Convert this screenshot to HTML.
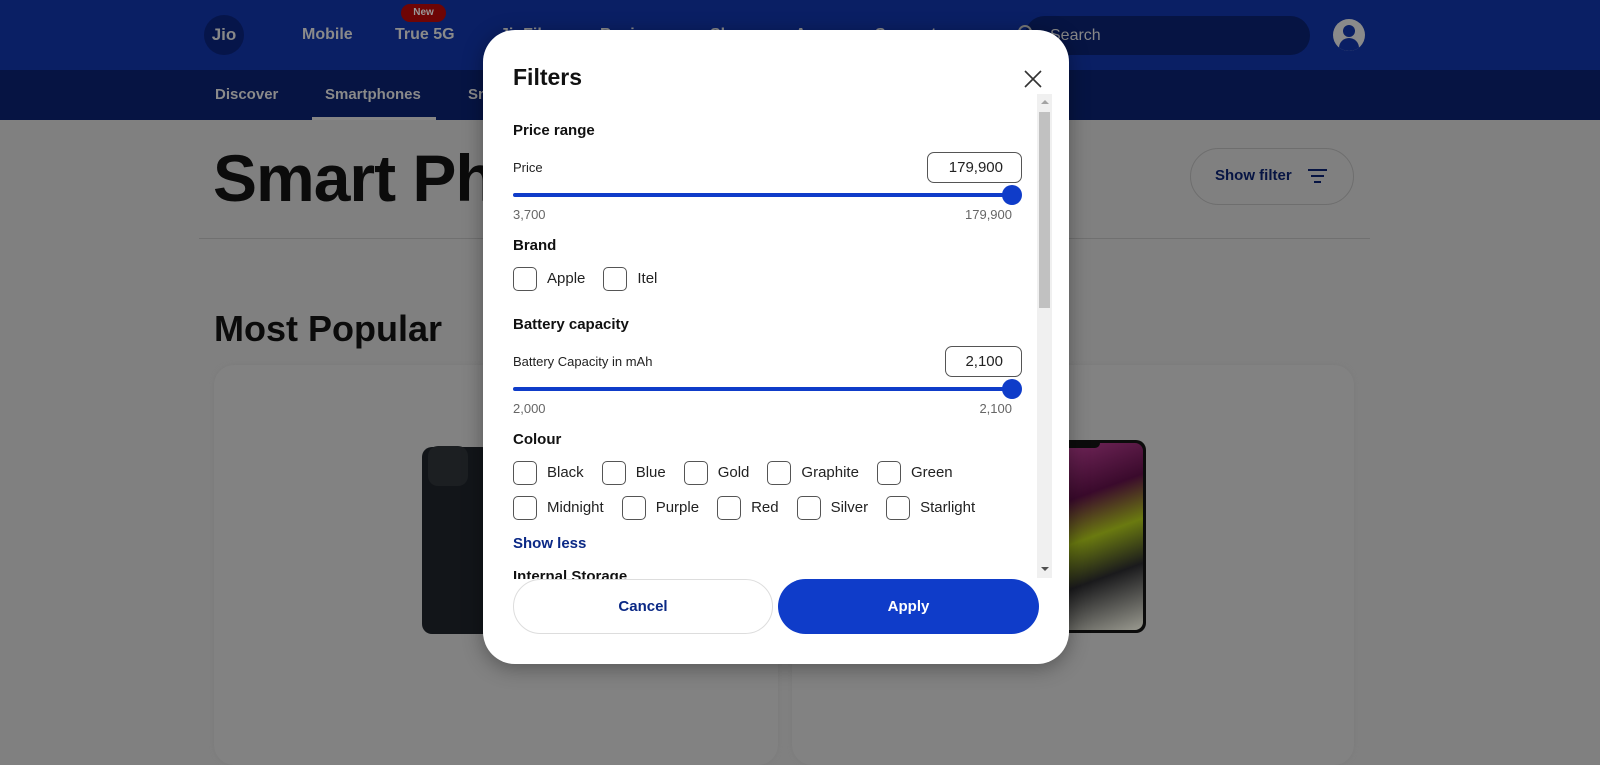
<!DOCTYPE html>
<html><head><meta charset="utf-8"><style>
*{box-sizing:border-box;margin:0;padding:0}
html,body{background:#808080}
body{width:1600px;height:745px;overflow:hidden;font-family:"Liberation Sans",Arial,sans-serif;position:relative}
.a{position:absolute}
.top{left:0;top:0;width:1600px;height:70px;background:#0a1f64}
.sub{left:0;top:70px;width:1600px;height:50px;background:#061443}
.nav{color:#8a8a8a;font-weight:bold;font-size:16px}
.cb{display:inline-block;width:24px;height:24px;border:1px solid #555;border-radius:5px;vertical-align:middle;margin-right:10px}
.row{position:absolute;left:513px;font-size:15px;color:#222;white-space:nowrap}
.row span.i{display:inline-block;margin-right:18px}
.h{position:absolute;left:513px;font-weight:bold;font-size:15px;color:#111}
.r{position:absolute;right:588px;font-size:13px;color:#666;text-align:right}
</style></head><body>
<div class="a top"></div>
<div class="a sub"></div>
<div class="a" style="left:204px;top:15px;width:40px;height:40px;border-radius:50%;background:#06154a;color:#888;font-weight:bold;font-size:17px;text-align:center;line-height:40px">Jio</div>
<div class="a nav" style="left:302px;top:26px">Mobile</div>
<div class="a nav" style="left:395px;top:26px">True 5G</div>
<div class="a" style="left:401px;top:4px;width:45px;height:18px;border-radius:9px;background:#6e0505;color:#999;font-size:10px;font-weight:bold;text-align:center;line-height:18px">New</div>
<div class="a nav" style="left:500px;top:26px">JioFiber</div>
<div class="a nav" style="left:600px;top:26px">Business</div>
<div class="a nav" style="left:710px;top:26px">Shop</div>
<div class="a nav" style="left:795px;top:26px">Apps</div>
<div class="a nav" style="left:875px;top:26px">Support</div>
<div class="a" style="left:1025px;top:16px;width:285px;height:39px;border-radius:20px;background:#061443"></div>
<div class="a" style="left:1018px;top:25px;width:14px;height:14px;border:2px solid #777;border-radius:50%"></div>
<div class="a nav" style="left:1050px;top:27px;font-weight:normal;color:#888;font-size:16px">Search</div>
<div class="a" style="left:1333px;top:19px;width:32px;height:32px;border-radius:50%;background:#8a8a8a;overflow:hidden"><div class="a" style="left:10px;top:6px;width:12px;height:12px;border-radius:50%;background:#0a1f64"></div><div class="a" style="left:6px;top:19px;width:20px;height:14px;border-radius:10px 10px 0 0;background:#0a1f64"></div></div>
<div class="a nav" style="left:215px;top:86px;font-size:15px">Discover</div>
<div class="a nav" style="left:325px;top:86px;font-size:15px">Smartphones</div>
<div class="a nav" style="left:468px;top:86px;font-size:15px">Smart</div>
<div class="a" style="left:312px;top:117px;width:124px;height:3px;background:#858585"></div>
<div class="a" style="left:213px;top:140px;font-weight:bold;font-size:66px;color:#0b0b0b;letter-spacing:-1px">Smart Phones</div>
<div class="a" style="left:1190px;top:148px;width:164px;height:57px;border:1px solid #6e6e6e;border-radius:29px"></div>
<div class="a" style="left:1215px;top:167px;font-weight:bold;font-size:15px;color:#061443">Show filter</div>
<div class="a" style="left:1308px;top:169px;width:19px;height:2px;background:#061443"></div>
<div class="a" style="left:1311px;top:175px;width:13px;height:2px;background:#061443"></div>
<div class="a" style="left:1314px;top:181px;width:7px;height:2px;background:#061443"></div>
<div class="a" style="left:199px;top:238px;width:1171px;height:1px;background:#707070"></div>
<div class="a" style="left:214px;top:308px;font-weight:bold;font-size:36px;color:#0b0b0b">Most Popular</div>
<div class="a" style="left:214px;top:365px;width:564px;height:400px;border-radius:20px;background:#828282;box-shadow:0 0 4px #7a7a7a"></div>
<div class="a" style="left:792px;top:365px;width:562px;height:400px;border-radius:20px;background:#828282;box-shadow:0 0 4px #7a7a7a"></div>
<div class="a" style="left:422px;top:447px;width:70px;height:187px;border-radius:10px;background:#121519"></div>
<div class="a" style="left:428px;top:446px;width:40px;height:40px;border-radius:10px;background:#1c1f22"></div>
<div class="a" style="left:1040px;top:440px;width:106px;height:193px;border-radius:10px;background:#0c0c0c"></div>
<div class="a" style="left:1043px;top:443px;width:100px;height:187px;border-radius:8px;background:linear-gradient(160deg,#7a2a60 0%,#3a0a2c 30%,#6a7a10 50%,#1a1a1c 70%,#9a9a90 100%)"></div>
<div class="a" style="left:1064px;top:440px;width:36px;height:8px;border-radius:0 0 5px 5px;background:#0c0c0c"></div>
<!-- modal -->
<div class="a" style="left:483px;top:30px;width:586px;height:634px;background:#fff;border-radius:32px;box-shadow:0 4px 20px rgba(0,0,0,.35)"></div>
<div class="a" style="left:513px;top:64px;font-weight:bold;font-size:23px;color:#111">Filters</div>
<svg class="a" style="left:1023px;top:69px" width="20" height="20"><path d="M2 2L18 18M18 2L2 18" stroke="#333" stroke-width="1.6"/></svg>
<div class="a" style="left:1037px;top:94px;width:15px;height:484px;background:#f0f0f0"></div>
<div class="a" style="left:1039px;top:112px;width:11px;height:196px;background:#c1c1c1"></div>
<div class="a" style="left:1041px;top:100px;width:0;height:0;border-left:4px solid transparent;border-right:4px solid transparent;border-bottom:4px solid #a3a3a3"></div>
<div class="a" style="left:1041px;top:567px;width:0;height:0;border-left:4px solid transparent;border-right:4px solid transparent;border-top:4px solid #505050"></div>
<div class="a" style="left:483px;top:94px;width:554px;height:485px;overflow:hidden">
<div style="position:absolute;left:-483px;top:-94px;width:1600px;height:700px">
<div class="h" style="top:122px">Price range</div>
<div class="row" style="top:160px;font-size:13px">Price</div>
<div class="a" style="left:927px;top:152px;width:95px;height:31px;border:1px solid #555;border-radius:7px;font-size:15px;color:#222;text-align:right;padding-right:18px;line-height:29px">179,900</div>
<div class="a" style="left:513px;top:193px;width:500px;height:4px;background:#0f3cc9;border-radius:2px"></div>
<div class="a" style="left:1002px;top:185px;width:20px;height:20px;border-radius:50%;background:#0f3cc9"></div>
<div class="row" style="top:207px;font-size:13px;color:#666">3,700</div>
<div class="r" style="top:207px">179,900</div>
<div class="h" style="top:237px">Brand</div>
<div class="row" style="top:267px"><span class="i"><span class="cb"></span>Apple</span><span class="i"><span class="cb"></span>Itel</span></div>
<div class="h" style="top:316px">Battery capacity</div>
<div class="row" style="top:354px;font-size:13px">Battery Capacity in mAh</div>
<div class="a" style="left:945px;top:346px;width:77px;height:31px;border:1px solid #555;border-radius:7px;font-size:15px;color:#222;text-align:right;padding-right:18px;line-height:29px">2,100</div>
<div class="a" style="left:513px;top:387px;width:500px;height:4px;background:#0f3cc9;border-radius:2px"></div>
<div class="a" style="left:1002px;top:379px;width:20px;height:20px;border-radius:50%;background:#0f3cc9"></div>
<div class="row" style="top:401px;font-size:13px;color:#666">2,000</div>
<div class="r" style="top:401px">2,100</div>
<div class="h" style="top:431px">Colour</div>
<div class="row" style="top:461px"><span class="i"><span class="cb"></span>Black</span><span class="i"><span class="cb"></span>Blue</span><span class="i"><span class="cb"></span>Gold</span><span class="i"><span class="cb"></span>Graphite</span><span class="i"><span class="cb"></span>Green</span></div>
<div class="row" style="top:496px"><span class="i"><span class="cb"></span>Midnight</span><span class="i"><span class="cb"></span>Purple</span><span class="i"><span class="cb"></span>Red</span><span class="i"><span class="cb"></span>Silver</span><span class="i"><span class="cb"></span>Starlight</span></div>
<div class="h" style="top:535px;color:#0a2885">Show less</div>
<div class="h" style="top:568px">Internal Storage</div>
</div></div>
<div class="a" style="left:513px;top:579px;width:260px;height:55px;border:1px solid #ddd;border-radius:28px;text-align:center;line-height:53px;font-weight:bold;font-size:15px;color:#0a2885">Cancel</div>
<div class="a" style="left:778px;top:579px;width:261px;height:55px;background:#0f3cc9;border-radius:28px;text-align:center;line-height:55px;font-weight:bold;font-size:15px;color:#fff">Apply</div>
</body></html>
